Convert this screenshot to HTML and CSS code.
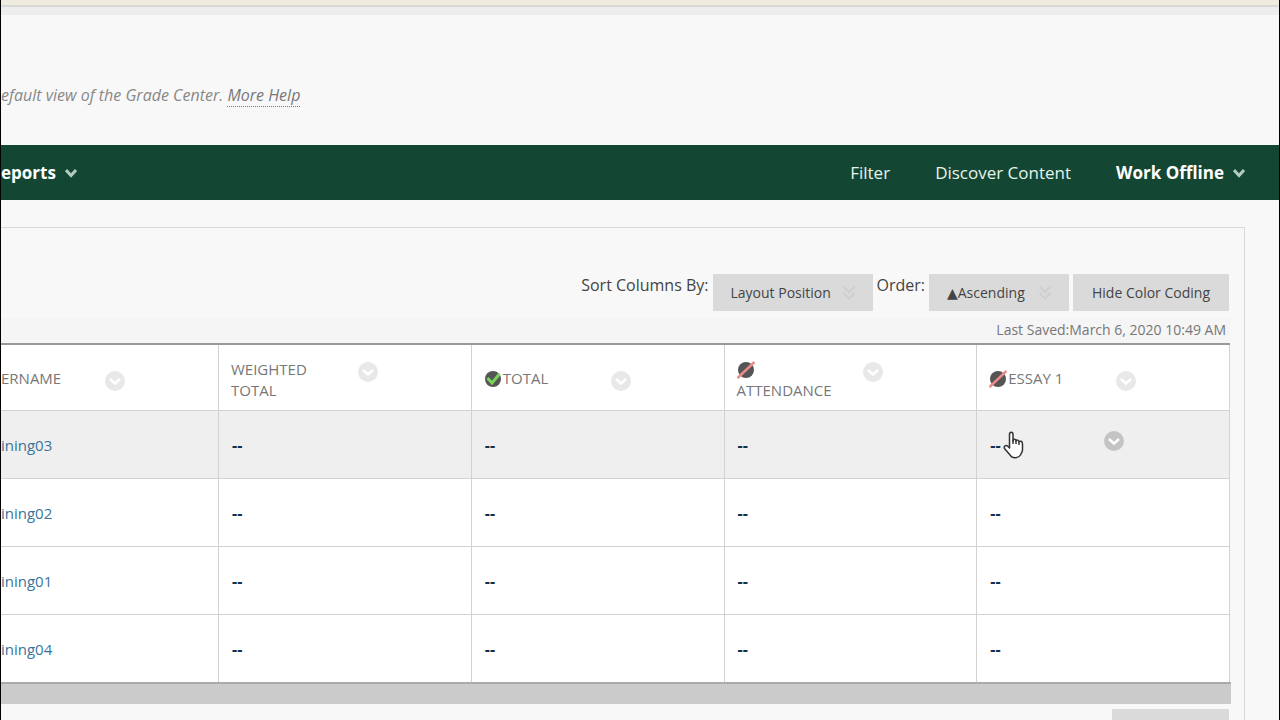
FILE: index.html
```html
<!DOCTYPE html>
<html lang="en">
<head>
  <meta charset="UTF-8">
  <meta name="viewport" content="width=device-width, initial-scale=1.0">
  <title>Grade Center</title>
  <link rel="stylesheet" href="styles.css">
</head>
<body>
  <!-- shared icons -->
  <svg class="sprite" aria-hidden="true">
    <symbol id="chevron" viewBox="0 0 12 10">
      <path d="M1 2 L6 7.500 L11 2" fill="none" stroke="currentColor" stroke-width="3"/>
    </symbol>
    <symbol id="double-chevron" viewBox="0 0 14 16">
      <path d="M1.500 1.500 L7 7 L12.500 1.500 M1.500 8 L7 13.500 L12.500 8" fill="none" stroke="currentColor" stroke-width="2"/>
    </symbol>
    <symbol id="menu-circle" viewBox="0 0 20 20">
      <circle cx="10" cy="10" r="10" fill="currentColor"/>
      <path d="M5 8 L10 12.500 L15 8" fill="none" stroke="#fff" stroke-width="2.6"/>
    </symbol>
    <symbol id="shown" viewBox="0 0 18 18">
      <circle cx="9" cy="9" r="8" fill="#555"/>
      <path d="M3.500 8 L8 13 L15.500 4" fill="none" stroke="#7bd35c" stroke-width="3"/>
    </symbol>
    <symbol id="hidden" viewBox="0 0 18 18">
      <circle cx="9" cy="9" r="8" fill="#555"/>
      <path d="M0.500 17 L17.500 1" stroke="#ee8a8a" stroke-width="2.6"/>
    </symbol>
  </svg>

  <div class="topbar"></div>

  <p class="intro">efault view of the Grade Center. <a href="#">More Help</a></p>

  <nav class="nav">
    <a href="#" class="menu reports">eports <svg class="chevron"><use href="#chevron"/></svg></a>
    <a href="#">Filter</a>
    <a href="#">Discover Content</a>
    <a href="#" class="menu">Work Offline <svg class="chevron"><use href="#chevron"/></svg></a>
  </nav>

  <main class="panel">
    <div class="toolbar">
      <label for="sortBy">Sort Columns By:</label>
      <span class="dropdown sort">
        <select id="sortBy"><option>Layout Position</option></select>
        <svg><use href="#double-chevron"/></svg>
      </span>
      <label for="order">Order:</label>
      <span class="dropdown order">
        <select id="order"><option>▲Ascending</option></select>
        <svg><use href="#double-chevron"/></svg>
      </span>
      <button type="button" class="btn">Hide Color Coding</button>
    </div>
    <div class="saved">Last Saved:March 6, 2020 10:49 AM</div>

    <table class="grades">
      <thead>
        <tr>
          <th class="user"><div class="head"><span>ERNAME</span><button type="button" class="circle" aria-label="Username options"><svg><use href="#menu-circle"/></svg></button></div></th>
          <th><div class="head"><span>WEIGHTED<br>TOTAL</span><button type="button" class="circle" aria-label="Weighted total options"><svg><use href="#menu-circle"/></svg></button></div></th>
          <th><div class="head"><span><svg class="status"><use href="#shown"/></svg>TOTAL</span><button type="button" class="circle" aria-label="Total options"><svg><use href="#menu-circle"/></svg></button></div></th>
          <th><div class="head"><span><svg class="status"><use href="#hidden"/></svg><br>ATTENDANCE</span><button type="button" class="circle" aria-label="Attendance options"><svg><use href="#menu-circle"/></svg></button></div></th>
          <th><div class="head"><span><svg class="status"><use href="#hidden"/></svg>ESSAY 1</span><button type="button" class="circle" aria-label="Essay 1 options"><svg><use href="#menu-circle"/></svg></button></div></th>
        </tr>
      </thead>
      <tbody>
        <tr class="active">
          <td class="user"><a href="#">ining03</a></td>
          <td>--</td>
          <td>--</td>
          <td>--</td>
          <td>
            <div class="cell">
              <span>--</span>
              <button type="button" class="circle dark" aria-label="Grade options"><svg><use href="#menu-circle"/></svg></button>
              <svg class="pointer" viewBox="0 0 22 28">
                <path d="M6.500 15 V3.500 C6.500 0.500 10 0.500 10 3.500 V10 C10.500 7.500 13 8 13 10 C13.500 8.500 16 8.800 16 11 C17 9.500 19.500 10 19.500 13 V19 C19.500 21 18 22 17.500 24 C15.500 27.500 9 27.500 7.500 24.500 L1.500 17.500 C0.500 15.500 3 13.500 4.500 15 L6.500 17 Z" fill="#fff" stroke="#333" stroke-width="1.500" stroke-linejoin="round"/>
                <path d="M10 9 V13 M13 10 V13 M16 11 V14" stroke="#333" stroke-width="1.400"/>
              </svg>
            </div>
          </td>
        </tr>
        <tr>
          <td class="user"><a href="#">ining02</a></td>
          <td>--</td>
          <td>--</td>
          <td>--</td>
          <td>--</td>
        </tr>
        <tr>
          <td class="user"><a href="#">ining01</a></td>
          <td>--</td>
          <td>--</td>
          <td>--</td>
          <td>--</td>
        </tr>
        <tr>
          <td class="user"><a href="#">ining04</a></td>
          <td>--</td>
          <td>--</td>
          <td>--</td>
          <td>--</td>
        </tr>
      </tbody>
    </table>
    <div class="scrollbar"></div>
    <div class="footer">
      <button type="button" class="btn" aria-label="Edit rows displayed"></button>
    </div>
  </main>
</body>
</html>
```

FILE: styles.css
```css
* {
  box-sizing: border-box;
}
body {
  display: flex;
  flex-direction: column;
  margin: 0;
  height: 100vh;
  overflow: hidden;
  border: solid #000;
  border-width: 0 1px;
  background-color: #f8f8f8;
  color: #444;
  font-family: "Open Sans", sans-serif;
  font-size: 16px;
}
.sprite {
  display: none;
}
.topbar {
  height: 15px;
  background-color: #ededee;
  border-top: 5px solid #efecdf;
  box-shadow: inset 0 2px #d9d9d9;
}
.intro {
  margin: 0;
  padding: 67px 0 37px;
  line-height: 26px;
  font-style: italic;
  color: #888;
}
.intro a {
  color: #777;
  text-decoration: none;
  border-bottom: 1px dotted #777;
}

/* green action bar */
.nav {
  display: flex;
  flex-shrink: 0;
  align-items: center;
  gap: 45px;
  height: 55px;
  padding-right: 34px;
  background-color: #144733;
  font-size: 17px;
}
.nav a {
  color: #e6f3ec;
  text-decoration: none;
}
.nav .menu {
  display: flex;
  align-items: center;
  gap: 9px;
  font-weight: bold;
  color: #fff;
}
.nav .reports {
  margin-right: auto;
}
.chevron {
  width: 12px;
  height: 10px;
  color: #b5cbbf;
}

/* grade center panel */
.panel {
  flex: 1;
  min-height: 0;
  overflow: hidden;
  margin: 27px 34px 0 0;
  padding: 46px 14px 0 0;
  border-top: 1px solid #d8d8d8;
  border-right: 1px solid #d8d8d8;
}
.toolbar {
  display: flex;
  justify-content: flex-end;
  gap: 4px;
  height: 44px;
  padding-right: 1px;
  line-height: 22px;
}
.dropdown {
  position: relative;
}
.dropdown select,
.btn {
  width: 100%;
  height: 37px;
  padding: 0 18px;
  border: none;
  border-radius: 1px;
  background-color: #dadada;
  color: #444;
  font-family: "Open Sans", "DejaVu Sans", sans-serif;
  font-size: 14px;
  appearance: none;
}
.dropdown svg {
  position: absolute;
  top: 11px;
  right: 17px;
  width: 14px;
  height: 16px;
  color: #cfcfcf;
  pointer-events: none;
}
.sort {
  width: 160px;
}
.order {
  width: 140px;
}
.btn {
  width: 156px;
  text-align: center;
}
.saved {
  height: 25px;
  padding-right: 4px;
  background-color: #f5f5f5;
  color: #777;
  font-size: 14px;
  line-height: 24px;
  text-align: right;
}

.grades {
  width: 100%;
  table-layout: fixed;
  border-collapse: separate;
  border-spacing: 0;
  border-top: 2px solid #999;
  background-color: #fff;
  font-size: 15px;
}
th,
td {
  height: 68px;
  padding: 0 0 0 12px;
  border-right: 1px solid #d2d2d2;
  border-bottom: 1px solid #d2d2d2;
  text-align: left;
  vertical-align: middle;
}
th {
  height: 66px;
  padding-top: 4px;
  font-weight: normal;
  color: #777;
  line-height: 21px;
}
td {
  padding-left: 13px;
  font-size: 16px;
  font-weight: bold;
  color: #14304d;
}
th.user,
td.user {
  width: 218px;
  padding-left: 0;
}
td a {
  color: #3a7599;
  font-size: 15px;
  font-weight: normal;
  text-decoration: none;
}
.active td {
  background-color: #efefef;
}
tbody tr:last-child td {
  height: 67px;
  border-bottom: none;
}
.head {
  display: flex;
  justify-content: space-between;
  align-items: flex-start;
  padding-right: 93px;
}
.status {
  width: 18px;
  height: 18px;
  margin-right: 1px;
  vertical-align: -4px;
}
.circle {
  width: 20px;
  height: 20px;
  margin-top: 3px;
  padding: 0;
  border: none;
  background: none;
  color: #e8e8e8;
}
.circle svg {
  display: block;
  width: 20px;
  height: 20px;
}
.circle.dark {
  margin: 0 0 8px;
  color: #c4c4c4;
}
.cell {
  position: relative;
  display: flex;
  justify-content: space-between;
  align-items: center;
  padding-right: 105px;
}
.pointer {
  position: absolute;
  top: 0;
  left: 13px;
  width: 22px;
  height: 28px;
}

.scrollbar {
  height: 22px;
  margin-right: -1px;
  border-top: 2px solid #aaa;
  background-color: #cbcbcb;
}
.footer {
  display: flex;
  justify-content: flex-end;
  padding: 5px 1px 0 0;
}
.footer .btn {
  width: 117px;
}
```
